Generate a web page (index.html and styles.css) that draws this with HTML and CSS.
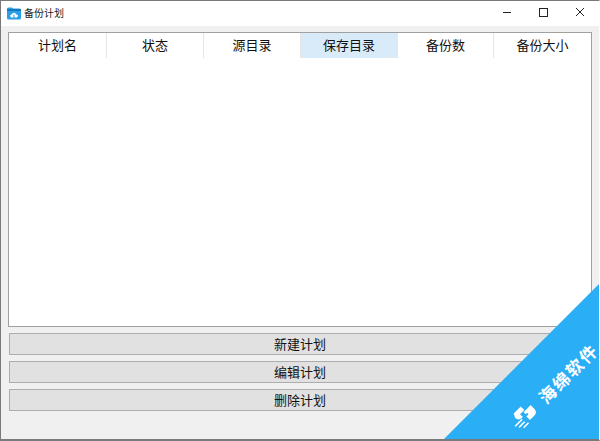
FILE: index.html
```html
<!DOCTYPE html>
<html lang="zh">
<head>
<meta charset="utf-8">
<title>备份计划</title>
<link rel="stylesheet" href="styles.css">
</head>
<body>
<div class="window">
  <div class="titlebar">
    <svg class="app-icon" width="14" height="13" viewBox="0 0 14 13">
      <path d="M0 2 a1.5 1.5 0 0 1 1.5-1.5 h3.5 l1.2 1 h6.3 a1.500 1.500 0 0 1 1.500 1.500 v8 a1.500 1.500 0 0 1-1.500 1.500 h-11 a1.500 1.500 0 0 1-1.500-1.500z" fill="#2a9fe8"/>
      <rect x="0" y="2" width="14" height="2" fill="#1378bd"/>
      <path d="M4.5 10.5 a1.5 1.5 0 0 1 .3-3 a2.3 2.3 0 0 1 4.4 0 a1.5 1.5 0 0 1 .3 3z" fill="#fff"/>
      <path d="M7 7.5 v4" stroke="#2a9fe8" stroke-width="1"/>
    </svg>
    <span class="title">备份计划</span>
    <div class="controls">
      <svg width="36" height="25" viewBox="0 0 36 25"><path d="M14 11.5 h8" stroke="#222" stroke-width="1"/></svg>
      <svg width="36" height="25" viewBox="0 0 36 25"><rect x="14.5" y="7.5" width="8" height="8" fill="none" stroke="#222" stroke-width="1"/></svg>
      <svg width="36" height="25" viewBox="0 0 36 25"><path d="M15 7 l8 8 M23 7 l-8 8" stroke="#222" stroke-width="1"/></svg>
    </div>
  </div>
  <div class="content">
    <div class="table">
      <div class="thead">
        <div class="th">计划名</div>
        <div class="th">状态</div>
        <div class="th">源目录</div>
        <div class="th th-hover">保存目录</div>
        <div class="th">备份数</div>
        <div class="th">备份大小</div>
      </div>
    </div>
    <div class="actions">
      <button class="btn">新建计划</button>
      <button class="btn">编辑计划</button>
      <button class="btn">删除计划</button>
    </div>
  </div>
  <div class="ribbon">
    <div class="mark">
      <svg class="mark-logo" width="30" height="20" viewBox="0 0 30 20">
        <path d="M9 1 h10 v5 h-6 v4 h4 v-3 h10 v5 q0 5-5 5 h-6 v-5 h3 v-2 h-6 q-6 0-6-5z" fill="#fff"/>
        <path d="M1 11 h10 M3 14.500 h8 M6 18 h7" stroke="#fff" stroke-width="1.600" fill="none"/>
      </svg>
      <span class="mark-text">海绵软件</span>
    </div>
  </div>
</div>
</body>
</html>
```
FILE: styles.css
```css
* { box-sizing: border-box; }
html, body { margin: 0; padding: 0; }
body { width: 600px; height: 441px; overflow: hidden; font-family: "Noto Sans CJK SC", "Liberation Sans", sans-serif; }
.window {
  position: relative;
  width: 600px;
  height: 441px;
  background: #f0f0f0;
  border: 1px solid #7a7a7a;
  border-right-color: #fff;
  border-bottom-width: 2px;
  overflow: hidden;
  display: flex;
  flex-direction: column;
}
.titlebar {
  height: 25px;
  background: #fff;
  display: flex;
  align-items: center;
  padding-left: 6px;
  flex: none;
}
.app-icon { flex: none; }
.title { margin-left: 3px; padding-bottom: 2px; font-size: 10px; color: #222; }
.controls { margin-left: auto; display: flex; margin-right: 2px; }
.controls svg { display: block; }
.content {
  flex: 1;
  display: flex;
  flex-direction: column;
  padding: 6px 7px 0 7px;
}
.table {
  height: 295px;
  background: #fff;
  border: 1px solid #a0a0a0;
  flex: none;
}
.thead { display: flex; height: 25px; }
.th {
  width: 97px;
  flex: none;
  display: flex;
  align-items: center;
  justify-content: center;
  padding-bottom: 2px;
  font-size: 13px;
  color: #111;
  background: #fff;
  border-right: 1px solid #e5e5e5;
}
.th:first-child { width: 98px; }
.th:nth-child(5) { width: 96px; }
.th:last-child { border-right: 0; flex: 1; }
.th-hover { background: #d9ebf9; border-right-color: #d9ebf9; }
.actions {
  display: flex;
  flex-direction: column;
  gap: 6px;
  margin-top: 6px;
  padding-left: 1px;
}
.btn {
  height: 22px;
  width: 582px;
  padding: 0 0 2px;
  background: #e1e1e1;
  border: 1px solid #adadad;
  font: 13px "Noto Sans CJK SC", "Liberation Sans", sans-serif;
  color: #111;
  text-align: center;
}
.ribbon {
  position: absolute;
  right: -1px;
  bottom: -2px;
  width: 158px;
  height: 158px;
  background: #2aaef6;
  clip-path: polygon(100% 0, 100% 100%, 0 100%);
}
.mark {
  position: absolute;
  left: 55px;
  top: 93px;
  width: 114px;
  display: flex;
  align-items: center;
  gap: 8px;
  transform: rotate(-45deg);
  transform-origin: center;
  color: #fff;
}
.mark-logo { flex: none; }
.mark-text { font-size: 17px; font-weight: 700; letter-spacing: 2px; white-space: nowrap; line-height: 1; }
```
